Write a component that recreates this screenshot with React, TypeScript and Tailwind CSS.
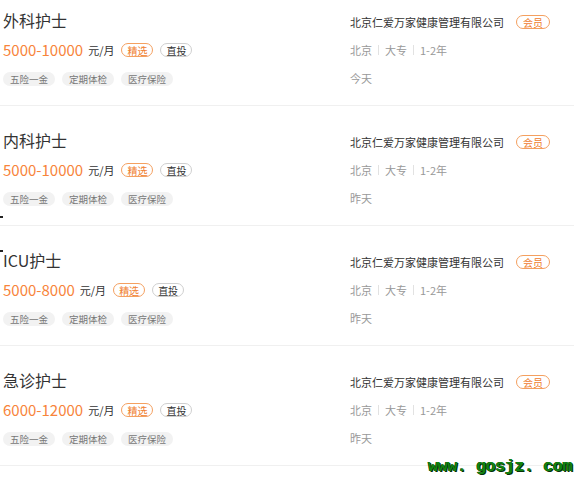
import React from "react";

type Job = {
  title: string;
  salary: string;
  date: string;
};

const jobs: Job[] = [
  { title: "外科护士", salary: "5000-10000", date: "今天" },
  { title: "内科护士", salary: "5000-10000", date: "昨天" },
  { title: "ICU护士", salary: "5000-8000", date: "昨天" },
  { title: "急诊护士", salary: "6000-12000", date: "昨天" },
];

const welfare = ["五险一金", "定期体检", "医疗保险"];

const JobRow: React.FC<{ job: Job }> = ({ job }) => (
  <div className="flex h-[120px] border-b border-[#f0f0f0]">
    <div className="flex-1 pl-[3px]">
      <h3 className="mt-[22px] h-6 text-[16px] leading-6 text-[#333]">{job.title}</h3>
      <div className="mt-2 flex h-5 items-center">
        <span className="text-[15px] leading-5 text-[#f8843a]">{job.salary}</span>
        <span className="ml-[5px] text-[11px] text-[#333]">元/月</span>
        <span className="ml-[7px] flex h-[14px] items-center rounded-full border border-[#f4a060] px-[5px] text-[10px] text-[#f08030]">
          精选
        </span>
        <span className="ml-[7px] flex h-[14px] items-center rounded-full border border-[#cfcfcf] px-[5px] text-[10px] text-[#333]">
          直投
        </span>
      </div>
      <div className="mt-3 flex gap-[7px]">
        {welfare.map((w) => (
          <span
            key={w}
            className="flex h-[14px] items-center rounded-full bg-[#f2f2f2] px-[7px] text-[9.5px] text-[#777]"
          >
            {w}
          </span>
        ))}
      </div>
    </div>
    <div className="w-[224px]">
      <div className="mt-[26px] flex h-5 items-center">
        <span className="text-[11px] text-[#333]">北京仁爱万家健康管理有限公司</span>
        <span className="ml-3 flex h-[14px] items-center rounded-full border border-[#f4a060] px-[6px] text-[10px] text-[#f08030]">
          会员
        </span>
      </div>
      <div className="mt-2 flex h-5 items-center text-[11px] text-[#999]">
        <span>北京</span>
        <span className="mx-[6px] h-[10px] w-px bg-[#e2e2e2]" />
        <span>大专</span>
        <span className="mx-[6px] h-[10px] w-px bg-[#e2e2e2]" />
        <span>1-2年</span>
      </div>
      <div className="mt-2 flex h-5 items-center text-[11px] text-[#999]">{job.date}</div>
    </div>
  </div>
);

export default function App() {
  return (
    <div
      className="relative h-[478px] w-[574px] overflow-hidden bg-white"
      style={{ fontFamily: '"Noto Sans CJK SC", "Noto Sans", sans-serif' }}
    >
      <div className="-mt-[14px]">
        {jobs.map((job) => (
          <JobRow key={job.title} job={job} />
        ))}
      </div>

      {/* stray cursor marks */}
      <span className="absolute left-0 top-[216px] h-[2px] w-[3px] bg-[#222]" />
      <span className="absolute left-0 top-[250px] h-[2px] w-[3px] bg-[#222]" />

      {/* watermark */}
      <div
        className="absolute right-[2px] top-[457px] whitespace-pre text-[17px] font-bold leading-5 tracking-[-0.6px] text-[#118411] [text-shadow:1px_1px_0_#053005,-0.5px_0_0_#053005]"
        style={{ fontFamily: '"Liberation Mono", monospace' }}
      >
        www. gosjz. com
      </div>
    </div>
  );
}
